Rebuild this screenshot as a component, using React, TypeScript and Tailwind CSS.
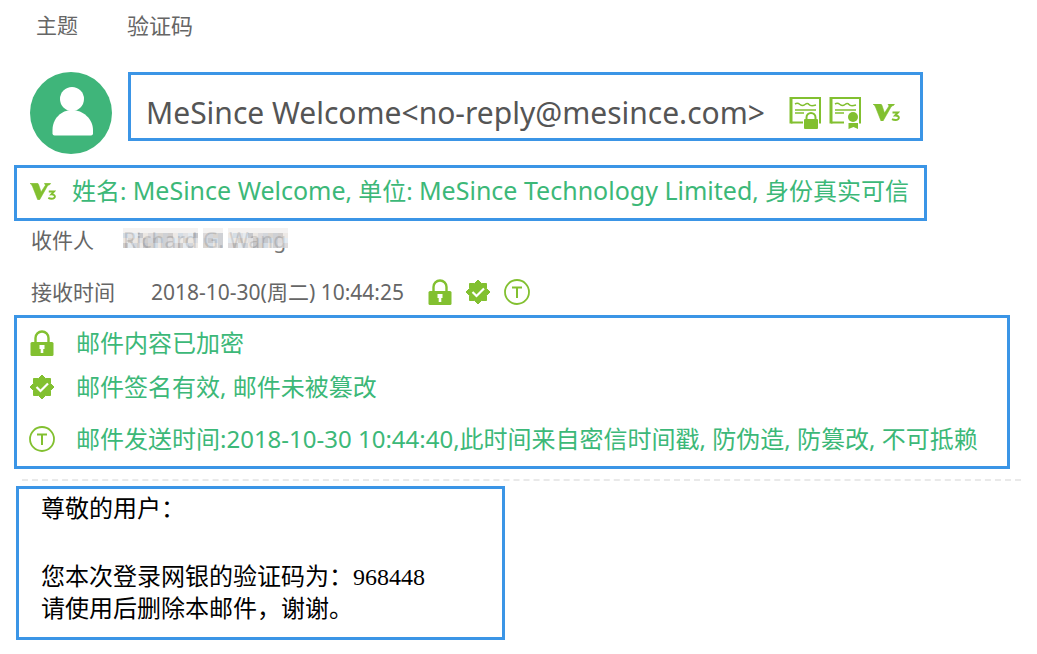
import type { ReactNode } from "react";

const sans = "font-['Noto_Sans','Noto_Sans_CJK_SC',sans-serif]";
const frame = "border-3 border-[#3b95e6]";

function Avatar() {
  return (
    <svg className="size-[82px] shrink-0" viewBox="0 0 82 82">
      <circle cx="41" cy="41" r="41" fill="#3fb57a" />
      <circle cx="42" cy="27" r="12" fill="#fff" />
      <path d="M22.500 61.500V58C22.500 47 31 38 42 38s21 9 21 20v3.500q0 2-2 2H24.500q-2 0-2-2Z" fill="#fff" />
    </svg>
  );
}

function Certificate({ children }: { children: ReactNode }) {
  return (
    <svg className="h-8 w-8 shrink-0" viewBox="0 0 32 32" fill="none" stroke="#82c030">
      <path d="M15 25.500H2M2 26V1H31V25.500H28" strokeWidth="2" />
      <path d="M2 0V26.500" strokeWidth="3" />
      <path d="M6 7q2.500-1.500 5 .5t5 0 4 0 7 .5" strokeWidth="1.500" />
      <path d="M6 13H27M6 16H15" strokeWidth="1.500" />
      {children}
    </svg>
  );
}

function CertificateLock() {
  return (
    <Certificate>
      <path d="M14 32V20a8 6 0 0 1 16 0v12Z" fill="#fff" stroke="none" />
      <path d="M17.500 23v-2.500a4.500 4.500 0 0 1 9 0V23" strokeWidth="2" />
      <rect x="15" y="22" width="14" height="10" rx="1" fill="#82c030" stroke="none" />
    </Certificate>
  );
}

function CertificateRibbon() {
  return (
    <Certificate>
      <rect x="18" y="14" width="12" height="18" fill="#fff" stroke="none" />
      <path d="M31 14V25.500" strokeWidth="2" />
      <circle cx="24" cy="20" r="5" fill="#82c030" stroke="none" />
      <path d="M19.500 26h9.500v6l-4.500-2-5 2Z" fill="#82c030" stroke="none" />
    </Certificate>
  );
}

function V3({ className }: { className: string }) {
  return (
    <svg className={className} viewBox="0 0 27 17" fill="none">
      <path d="M0 0H7.500Q8.500 0 9 1.500L11.500 9 16 2 15 0H21.500L20.500 1.500Q19 1.500 18 3L10 17H8L2.500 3Q2 1.500 0 0Z" fill="#82c030" stroke="#82c030" strokeWidth=".6" />
      <path d="M19.500 8.500H25L22.200 11.500C27 11.300 27 16 22.500 16Q20.500 16 19 15.200" stroke="#82c030" strokeWidth="2" />
    </svg>
  );
}

function Lock() {
  return (
    <svg className="h-[26px] w-6 shrink-0" viewBox="0 0 24 26" fill="none">
      <path d="M5.500 13V8a6.500 6.500 0 0 1 13 0v5" stroke="#82c030" strokeWidth="2.400" />
      <rect x=".5" y="12" width="23" height="14" rx="1.500" fill="#82c030" />
      <path d="M9.500 15h5v4h-1.200V23h-2.600v-4H9.500Z" fill="#fff" />
    </svg>
  );
}

function Verified() {
  return (
    <svg className="size-6 shrink-0" viewBox="0 0 24 24" fill="none">
      <path d="M12 0l3.500 3.500 5 0 0 5L24 12l-3.500 3.500v5h-5L12 24l-3.500-3.500h-5v-5L0 12l3.500-3.500v-5h5Z" fill="#82c030" stroke="#82c030" strokeLinejoin="round" />
      <path d="M6.500 12l4 4L18 8.500" stroke="#fff" strokeWidth="2.200" />
    </svg>
  );
}

function Timestamp() {
  return (
    <svg className="size-[26px] shrink-0" viewBox="0 0 26 26" fill="none" stroke="#82c030" strokeWidth="1.800">
      <circle cx="13" cy="13" r="12" />
      <path d="M8 8.500H18M13 8.500V19" strokeWidth="2" />
    </svg>
  );
}

const shades = ["#d9d9dc", "#c3c5ca", "#e6e1dc", "#cbd5df", "#d0cac6", "#b9babf", "#e9e4e0", "#c9cdd3", "#dde5ec", "#c6c2c1", "#d5d2d4"];

// [first column, column count] of each masked word, in 5px cells
const maskedWords = [
  [0, 15],
  [16, 4],
  [21, 12],
];

// sender names are masked with a fine mosaic
function MaskedName({ name }: { name: string }) {
  return (
    <span className="relative text-[21px] text-[#777]">
      {name}
      <svg className="absolute top-0 left-0 h-7 w-[172px]" viewBox="0 0 172 28" shapeRendering="crispEdges">
        {maskedWords.map(([start, count]) =>
          Array.from({ length: count * 4 }, (_, i) => {
            const column = start + (i % count);
            const row = Math.floor(i / count);
            return (
              <rect
                key={`${column}-${row}`}
                x={column * 5}
                y={2 + row * 5}
                width="5"
                height="5"
                fill={row === 0 ? "#f1efee" : shades[(column * 7 + row * 3 + column * row) % shades.length]}
                opacity=".8"
              />
            );
          }),
        )}
      </svg>
    </span>
  );
}

const checks = [
  { icon: <Lock />, text: "邮件内容已加密", row: "" },
  { icon: <Verified />, text: "邮件签名有效, 邮件未被篡改", row: "mt-3" },
  {
    icon: <Timestamp />,
    text: "邮件发送时间:2018-10-30 10:44:40,此时间来自密信时间戳, 防伪造, 防篡改, 不可抵赖",
    row: "mt-5",
  },
];

export default function App() {
  return (
    <main className={`${sans} bg-white pt-[11px] pr-4 pb-4 pl-[14px] text-[#666]`}>
      <header className="flex items-center pl-[22px] leading-7">
        <span className="w-[91px] text-[21px]">主题</span>
        <h1 className="text-[22px]">验证码</h1>
      </header>

      <section className="mt-[33px] flex items-start gap-4 pl-4">
        <Avatar />
        <div className={`${frame} flex h-[69px] w-full max-w-[795px] items-center pt-3 pl-[15px] whitespace-nowrap`}>
          <span className="text-[30px] text-[#555]">MeSince Welcome&lt;no-reply@mesince.com&gt;</span>
          <div className="ml-6 flex items-center gap-2">
            <CertificateLock />
            <CertificateRibbon />
            <V3 className="ml-1 h-[17px] w-[27px]" />
          </div>
        </div>
      </section>

      <section className={`${frame} mt-[11px] flex h-14 max-w-[913px] items-center gap-4 pb-1 pl-[13px] whitespace-nowrap text-[#3cb878]`}>
        <V3 className="h-[17px] w-[26px]" />
        <p className="text-2xl">
          姓名: <span className="text-[25px]">MeSince Welcome</span>, 单位:{" "}
          <span className="text-[25px]">MeSince Technology Limited</span>, 身份真实可信
        </p>
      </section>

      <div className="mt-[5px] flex items-center pl-[17px] leading-7">
        <span className="w-[92px] text-[21px]">收件人</span>
        <MaskedName name="Richard G. Wang" />
      </div>

      <div className="mt-6 flex items-center pl-[17px] leading-7">
        <span className="w-[120px] text-[21px]">接收时间</span>
        <time className="text-[21px]">2018-10-30(周二) 10:44:25</time>
        <div className="ml-6 flex items-center gap-[14px]">
          <Lock />
          <Verified />
          <Timestamp />
        </div>
      </div>

      <ul className={`${frame} mt-[9px] max-w-[996px] pt-[9px] pb-[11px] pl-3 text-2xl whitespace-nowrap text-[#3cb878]`}>
        {checks.map(({ icon, text, row }) => (
          <li key={text} className={`flex h-8 items-center ${row}`}>
            <span className="flex w-[47px]">
              <span className="flex w-[26px] justify-center">{icon}</span>
            </span>
            {text}
          </li>
        ))}
      </ul>

      <hr className="mt-[10px] ml-2 border-t-2 border-dashed border-[#e9e9e9]" />

      <article
        className={`${frame} mt-[5px] ml-[2px] max-w-[489px] pt-1 pb-3 pl-[22px] font-['Liberation_Serif','Noto_Sans_CJK_SC',serif] text-2xl leading-8 text-black`}
      >
        <p>尊敬的用户：</p>
        <p className="mt-9">
          您本次登录网银的验证码为：968448
          <br />
          请使用后删除本邮件，谢谢。
        </p>
      </article>
    </main>
  );
}
